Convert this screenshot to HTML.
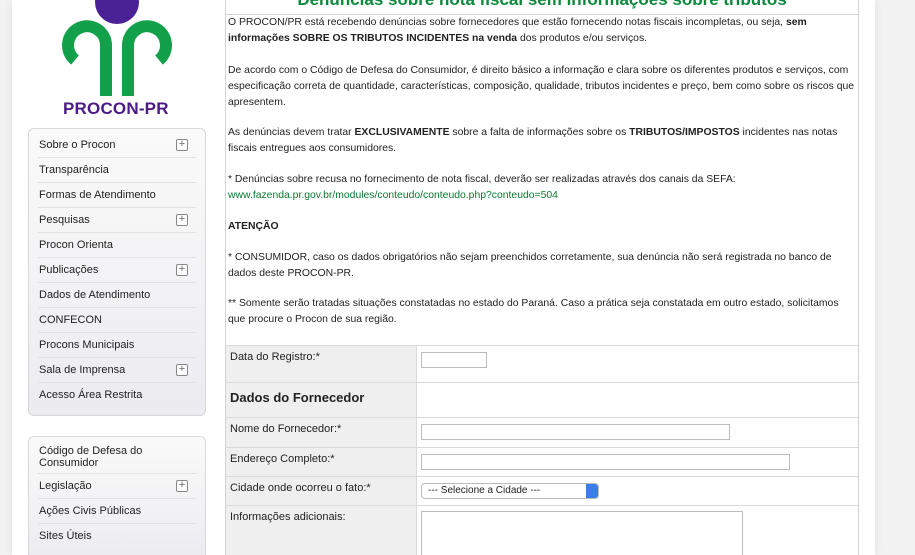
<!DOCTYPE html>
<html><head><meta charset="utf-8"><style>
html,body{margin:0;width:915px;height:555px;overflow:hidden}
body{background:#f2f2f2;font-family:"Liberation Sans",Arial,sans-serif;position:relative}
.wrap{position:absolute;left:12px;top:0;width:863px;height:555px;background:#fff;box-shadow:0 0 8px rgba(0,0,0,.08)}
.logo{position:absolute;left:0;top:0}
.brand{position:absolute;left:63px;top:99px;font-weight:bold;font-size:17px;color:#4a1a86;letter-spacing:.2px}
.menu{position:absolute;left:28px;width:176px;border:1px solid #d8d8d8;border-radius:6px;background:linear-gradient(#fafafa,#ececf0);overflow:hidden}
.menu div{margin:0 9px;border-bottom:1px solid #e2e2e2;font-size:11px;color:#222;height:24px;line-height:24px;padding-left:1px;position:relative}
.menu div:last-child{border-bottom:none}
.plus{position:absolute;right:8px;top:6px;width:10px;height:10px;border:1px solid #888;border-radius:2px;background:#fff;font-size:11px;line-height:9px;text-align:center;color:#666}
.content{position:absolute;left:225px;top:-2px;width:632px;height:557px;border-left:1px solid #d4d4d4;border-right:1px solid #d4d4d4;overflow:hidden}
.title{position:absolute;left:0;width:632px;top:-8px;text-align:center;font-size:17px;font-weight:bold;color:#0a8a3a}
.hr{position:absolute;left:0;top:16px;width:632px;border-top:1px solid #d4d4d4}
.p{position:absolute;left:2px;width:628px;font-size:10.4px;line-height:16px;color:#222}
a{color:#0a7a30;text-decoration:none}
table{position:absolute;left:0;top:347px;width:633px;border-collapse:collapse;font-size:11px;color:#222}
td{border-top:1px solid #dadada;vertical-align:top;padding:5px 4px}
td.l{background:#efefef;width:182px;border-right:1px solid #dadada}
.in{border:1px solid #bbb;height:14px;background:#fff;margin-top:1px}
</style></head><body>
<div class="wrap"></div>
<svg class="logo" width="200" height="100">
<path d="M106 96 V45 A19 19 0 1 0 75 60" fill="none" stroke="#12a04a" stroke-width="12"/>
<path d="M128 96 V45 A19 19 0 1 1 159 60" fill="none" stroke="#12a04a" stroke-width="12"/>
<circle cx="117" cy="2" r="22" fill="#4b2196"/>
</svg>
<div class="brand">PROCON-PR</div>
<div class="menu" style="top:128px;height:286px">
<div style="margin-top:4px">Sobre o Procon<span class="plus">+</span></div>
<div>Transparência</div><div>Formas de Atendimento</div>
<div>Pesquisas<span class="plus">+</span></div><div>Procon Orienta</div>
<div>Publicações<span class="plus">+</span></div><div>Dados de Atendimento</div>
<div>CONFECON</div><div>Procons Municipais</div>
<div>Sala de Imprensa<span class="plus">+</span></div><div>Acesso Área Restrita</div>
</div>
<div class="menu" style="top:436px;height:125px">
<div style="height:36px;line-height:12px;padding-top:7px;margin-top:1px;box-sizing:border-box">Código de Defesa do<br>Consumidor</div>
<div>Legislação<span class="plus">+</span></div><div>Ações Civis Públicas</div><div>Sites Úteis</div>
</div>
<div class="content">
<div class="title">Denúncias sobre nota fiscal sem informações sobre tributos</div>
<div class="hr"></div>
<div class="p" style="top:17px">O PROCON/PR está recebendo denúncias sobre fornecedores que estão fornecendo notas fiscais incompletas, ou seja, <b>sem informações SOBRE OS TRIBUTOS INCIDENTES na venda</b> dos produtos e/ou serviços.</div>
<div class="p" style="top:65px">De acordo com o Código de Defesa do Consumidor, é direito básico a informação e clara sobre os diferentes produtos e serviços, com especificação correta de quantidade, características, composição, qualidade, tributos incidentes e preço, bem como sobre os riscos que apresentem.</div>
<div class="p" style="top:127px">As denúncias devem tratar <b>EXCLUSIVAMENTE</b> sobre a falta de informações sobre os <b>TRIBUTOS/IMPOSTOS</b> incidentes nas notas fiscais entregues aos consumidores.</div>
<div class="p" style="top:174px">* Denúncias sobre recusa no fornecimento de nota fiscal, deverão ser realizadas através dos canais da SEFA:<br><a>www.fazenda.pr.gov.br/modules/conteudo/conteudo.php?conteudo=504</a></div>
<div class="p" style="top:221px"><b>ATENÇÃO</b></div>
<div class="p" style="top:252px">* CONSUMIDOR, caso os dados obrigatórios não sejam preenchidos corretamente, sua denúncia não será registrada no banco de dados deste PROCON-PR.</div>
<div class="p" style="top:298px">** Somente serão tratadas situações constatadas no estado do Paraná. Caso a prática seja constatada em outro estado, solicitamos que procure o Procon de sua região.</div>
<table>
<tr style="height:37px"><td class="l">Data do Registro:*</td><td><div class="in" style="width:64px"></div></td></tr>
<tr style="height:35px"><td class="l" style="font-size:13px;font-weight:bold;padding-top:7px">Dados do Fornecedor</td><td></td></tr>
<tr style="height:30px"><td class="l">Nome do Fornecedor:*</td><td><div class="in" style="width:307px"></div></td></tr>
<tr style="height:29px"><td class="l">Endereço Completo:*</td><td><div class="in" style="width:367px"></div></td></tr>
<tr style="height:29px"><td class="l">Cidade onde ocorreu o fato:*</td><td><div class="in" style="width:170px;border-radius:4px;font-size:10px;line-height:14px;padding-left:6px;position:relative">--- Selecione a Cidade ---<span style="position:absolute;right:0;top:0;width:12px;height:14px;background:#3b7ce8;border-radius:0 3px 3px 0"></span></div></td></tr>
<tr style="height:50px"><td class="l">Informações adicionais:</td><td><div class="in" style="width:320px;height:50px;margin-top:0"></div></td></tr>
</table>
</div>
</body></html>
